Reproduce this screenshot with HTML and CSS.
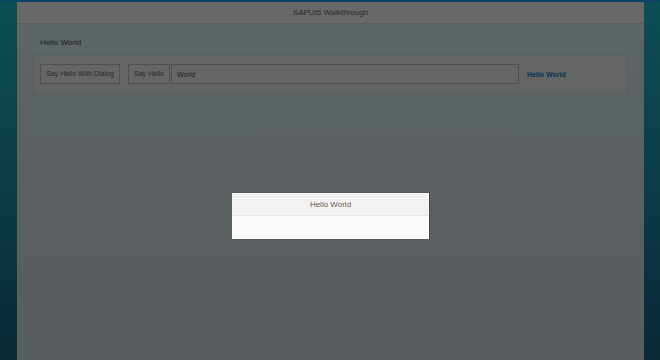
FILE: index.html
```html
<!DOCTYPE html>
<html lang="en">
<head>
<meta charset="utf-8">
<title>SAPUI5 Walkthrough</title>
<link rel="stylesheet" href="styles.css">
</head>
<body>
<div class="strip"></div>
<div class="shell">
  <header class="bar">SAPUI5 Walkthrough</header>
  <main class="page">
    <div class="panel-title">Hello World</div>
    <div class="panel">
      <button class="btn btn-dialog">Say Hello With Dialog</button>
      <button class="btn btn-hello">Say Hello</button>
      <input class="field" type="text" value="World">
      <span class="link">Hello World</span>
    </div>
  </main>
</div>
<div class="dialog">
  <div class="dialog-head">Hello World</div>
  <div class="dialog-body"></div>
</div>
</body>
</html>
```

FILE: styles.css
```css
html, body {
  margin: 0;
  padding: 0;
  height: 100%;
}
body {
  background: linear-gradient(to bottom, #0c4e56 0%, #0b3c48 50%, #0a2838 100%);
  font-family: "Liberation Sans", Arial, sans-serif;
  display: flex;
  flex-direction: column;
  overflow: hidden;
}
.strip {
  height: 2px;
  background: #0a4566;
  flex: none;
}
.shell {
  width: 627px;
  margin: 0 0 0 17px;
  flex: 1;
  display: flex;
  flex-direction: column;
  background: linear-gradient(to bottom, #5e6668 0%, #5a6062 50%, #585d60 100%);
}
.bar {
  height: 21px;
  line-height: 21px;
  border-bottom: 1px solid #5a5c5c;
  background: #686868;
  color: #2a2a2a;
  font-size: 8px;
  text-align: center;
}
.page {
  padding: 13px 16px 0 16px;
}
.panel-title {
  font-size: 8px;
  line-height: 12px;
  color: #1c2122;
  padding-left: 7px;
}
.panel {
  margin-top: 6px;
  border: 1px solid #5a5e5f;
  background: #636464;
  padding: 8px 6px 9px 6px;
  display: flex;
  align-items: center;
}
.btn {
  height: 20px;
  margin: 0;
  border: 1px solid #4f5050;
  background: #666666;
  color: #262626;
  font-family: "Liberation Sans", Arial, sans-serif;
  font-size: 7px;
  line-height: 18px;
  padding: 0;
  white-space: nowrap;
  text-align: center;
  box-sizing: border-box;
}
.btn-dialog {
  width: 80px;
}
.btn-hello {
  width: 42px;
  margin-left: 8px;
}
.field {
  width: 348px;
  height: 20px;
  margin: 0 0 0 1px;
  box-sizing: border-box;
  border: 1px solid #4e4f4f;
  background: #666666;
  color: #1e1e1e;
  font-family: "Liberation Sans", Arial, sans-serif;
  font-size: 7px;
  padding: 0 5px;
  outline: none;
}
.link {
  margin-left: 8px;
  color: #0a3452;
  font-size: 7px;
  font-weight: bold;
  white-space: nowrap;
}
.dialog {
  position: absolute;
  left: 232px;
  top: 193px;
  width: 197px;
  box-shadow: 1px 0 1px rgba(0, 0, 0, 0.2);
}
.dialog-head {
  height: 22px;
  line-height: 23px;
  background: #f2f2f2;
  border-bottom: 1px solid #e6e6e6;
  color: #6e5846;
  font-size: 8px;
  text-align: center;
}
.dialog-body {
  height: 23px;
  background: #fafafa;
}
```
